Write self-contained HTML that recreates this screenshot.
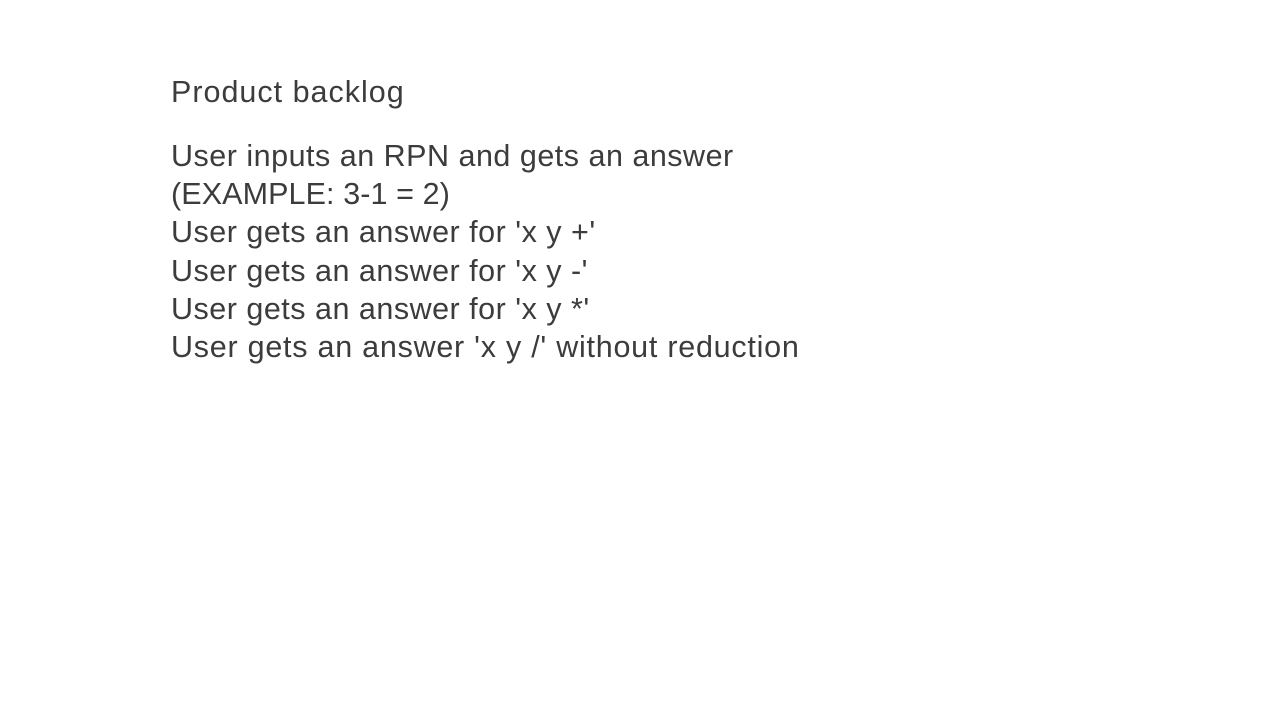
<!DOCTYPE html>
<html><head><meta charset="utf-8"><style>
html,body{margin:0;padding:0;background:#fff;width:1280px;height:720px;overflow:hidden}
body{font-family:"Liberation Sans",sans-serif;color:#3c3c3c;font-size:30.5px}
.t{position:absolute;left:171px;top:73px;line-height:38px;white-space:nowrap;letter-spacing:1px}
.b{position:absolute;left:171px;top:137px;line-height:38.2px;white-space:nowrap;letter-spacing:0.5px}
.e{letter-spacing:0.1px}
.l{letter-spacing:0.75px}
</style></head><body>
<div class="t">Product backlog</div>
<div class="b">User inputs an RPN and gets an answer<br><span class="e">(EXAMPLE: 3-1 = 2)</span><br>User gets an answer for 'x y +'<br>User gets an answer for 'x y -'<br>User gets an answer for 'x y *'<br><span class="l">User gets an answer 'x y /' without reduction</span></div>
</body></html>
